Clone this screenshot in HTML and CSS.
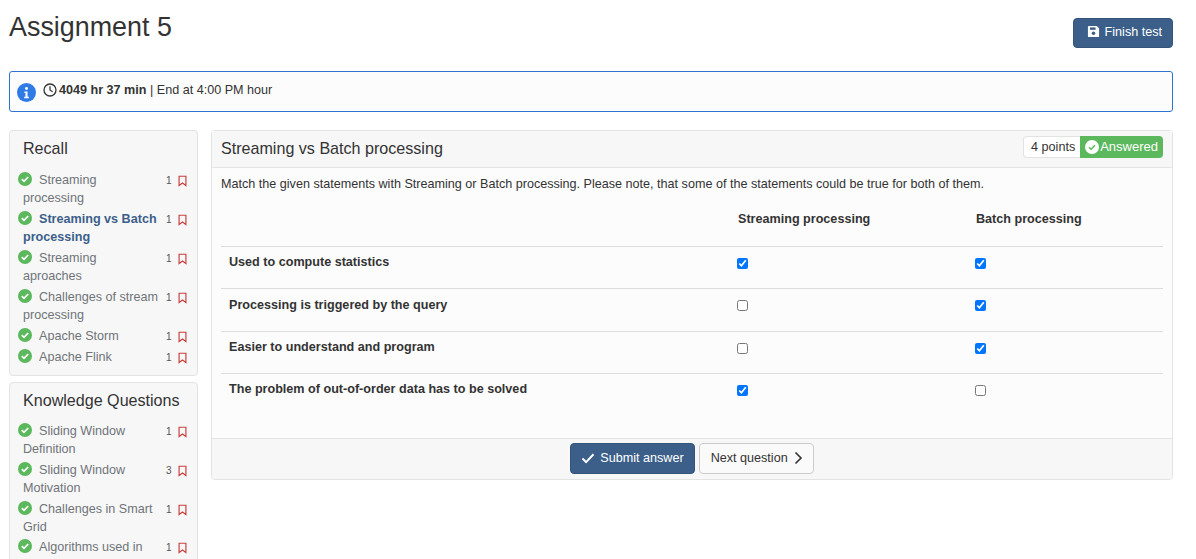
FILE: index.html
```html
<!DOCTYPE html>
<html lang="en">
<head>
  <meta charset="UTF-8" />
  <meta name="viewport" content="width=device-width, initial-scale=1.0"/>
  <title>Assignment 5</title>
  <link rel="stylesheet" href="styles.css">
</head>
<body>
  <svg class="defs" width="0" height="0">
    <symbol id="done" viewBox="0 0 14 14">
      <circle cx="7" cy="7" r="7" fill="#5cb85c"/>
      <path d="M3.800 7.200l2.200 2.200 4.200-4.400" fill="none" stroke="#fff" stroke-width="1.700"/>
    </symbol>
    <symbol id="mark" viewBox="0 0 10 12">
      <path d="M1.200 .7h7.600v10.400L5 8.300l-3.800 2.800z" fill="none" stroke="#c9413f" stroke-width="1.300"/>
    </symbol>
  </svg>

  <div class="page">
    <header class="top">
      <h1>Assignment 5</h1>
      <button class="btn btn-main btn-finish" type="button">
        <svg class="ico" viewBox="0 0 14 14" width="13" height="13"><path d="M2 1h8.500L13 3.500V12a1 1 0 0 1-1 1H2a1 1 0 0 1-1-1V2a1 1 0 0 1 1-1z" fill="#fff"/><rect x="3.200" y="2.600" width="6" height="2.600" fill="#3c5f8a"/><circle cx="7" cy="9" r="1.900" fill="#3c5f8a"/></svg>
        Finish test
      </button>
    </header>

    <div class="timer">
      <span class="info-dot">
        <svg viewBox="0 0 18 18" width="19" height="19"><circle cx="9" cy="9" r="9" fill="#2f7ae5"/><circle cx="9" cy="5.200" r="1.400" fill="#fff"/><path d="M7 8h3v5h1.200v1.400H6.800V13H8V9.400H7z" fill="#fff"/></svg>
      </span>
      <svg class="ico" viewBox="0 0 14 14" width="14" height="14"><circle cx="7" cy="7" r="6" fill="none" stroke="#333" stroke-width="1.300"/><path d="M7 3.300V7l2.600 1.700" fill="none" stroke="#333" stroke-width="1.200"/></svg>
      <span><b>4049 hr 37 min</b> | End at 4:00 PM hour</span>
    </div>

    <div class="columns">
      <aside class="side">
        <section class="side-box">
          <h2>Recall</h2>
          <div class="side-item"><span class="side-text"><svg class="done"><use href="#done"/></svg>Streaming processing</span><span class="side-num">1</span><svg class="mark"><use href="#mark"/></svg></div>
          <div class="side-item active"><span class="side-text"><svg class="done"><use href="#done"/></svg>Streaming vs Batch processing</span><span class="side-num">1</span><svg class="mark"><use href="#mark"/></svg></div>
          <div class="side-item"><span class="side-text"><svg class="done"><use href="#done"/></svg>Streaming aproaches</span><span class="side-num">1</span><svg class="mark"><use href="#mark"/></svg></div>
          <div class="side-item"><span class="side-text"><svg class="done"><use href="#done"/></svg>Challenges of stream processing</span><span class="side-num">1</span><svg class="mark"><use href="#mark"/></svg></div>
          <div class="side-item"><span class="side-text"><svg class="done"><use href="#done"/></svg>Apache Storm</span><span class="side-num">1</span><svg class="mark"><use href="#mark"/></svg></div>
          <div class="side-item"><span class="side-text"><svg class="done"><use href="#done"/></svg>Apache Flink</span><span class="side-num">1</span><svg class="mark"><use href="#mark"/></svg></div>
        </section>
        <section class="side-box">
          <h2>Knowledge Questions</h2>
          <div class="side-item"><span class="side-text"><svg class="done"><use href="#done"/></svg>Sliding Window Definition</span><span class="side-num">1</span><svg class="mark"><use href="#mark"/></svg></div>
          <div class="side-item"><span class="side-text"><svg class="done"><use href="#done"/></svg>Sliding Window Motivation</span><span class="side-num">3</span><svg class="mark"><use href="#mark"/></svg></div>
          <div class="side-item"><span class="side-text"><svg class="done"><use href="#done"/></svg>Challenges in Smart Grid</span><span class="side-num">1</span><svg class="mark"><use href="#mark"/></svg></div>
          <div class="side-item"><span class="side-text"><svg class="done"><use href="#done"/></svg>Algorithms used in Streaming</span><span class="side-num">1</span><svg class="mark"><use href="#mark"/></svg></div>
        </section>
      </aside>

      <main class="card">
        <div class="card-head">
          <h3>Streaming vs Batch processing</h3>
          <div class="badges">
            <span class="badge-points">4 points</span>
            <span class="badge-answered">
              <svg viewBox="0 0 14 14" width="14" height="14"><circle cx="7" cy="7" r="7" fill="#fff"/><path d="M4 7.200l2.100 2.100 3.900-4" fill="none" stroke="#5cb85c" stroke-width="1.500"/></svg>Answered
            </span>
          </div>
        </div>
        <div class="card-body">
          <p class="intro">Match the given statements with Streaming or Batch processing. Please note, that some of the statements could be true for both of them.</p>
          <table class="match">
            <thead>
              <tr><th></th><th>Streaming processing</th><th>Batch processing</th></tr>
            </thead>
            <tbody>
              <tr><td>Used to compute statistics</td><td><input type="checkbox" checked></td><td><input type="checkbox" checked></td></tr>
              <tr><td>Processing is triggered by the query</td><td><input type="checkbox"></td><td><input type="checkbox" checked></td></tr>
              <tr><td>Easier to understand and program</td><td><input type="checkbox"></td><td><input type="checkbox" checked></td></tr>
              <tr><td>The problem of out-of-order data has to be solved</td><td><input type="checkbox" checked></td><td><input type="checkbox"></td></tr>
            </tbody>
          </table>
        </div>
        <div class="card-foot">
          <button class="btn btn-main" type="button">
            <svg class="ico" viewBox="0 0 14 14" width="14" height="14"><path d="M1.500 7.500l3.600 3.600 7.400-7.800" fill="none" stroke="#fff" stroke-width="2"/></svg>
            Submit answer
          </button>
          <button class="btn btn-plain" type="button">
            Next question
            <svg class="ico" viewBox="0 0 10 14" width="10" height="14"><path d="M2.500 1.500L8 7l-5.500 5.500" fill="none" stroke="#333" stroke-width="1.600"/></svg>
          </button>
        </div>
      </main>
    </div>
  </div>
</body>
</html>
```

FILE: styles.css
```css
html, body {
  margin: 0;
  background: #fff;
}
body {
  font-family: "Liberation Sans", Arial, sans-serif;
  font-size: 12.6px;
  line-height: 18px;
  color: #333;
}
.defs {
  display: block;
  height: 0;
}
.page {
  height: 559px;
  overflow: hidden;
  padding: 0 23px 0 9px;
  box-sizing: border-box;
}
.top {
  display: flex;
  justify-content: space-between;
  align-items: flex-start;
  height: 71px;
}
h1 {
  margin: 10px 0 0;
  font-size: 26.9px;
  line-height: 34px;
  font-weight: 400;
}
.btn {
  font-family: inherit;
  font-size: 12.6px;
  line-height: 18px;
  border-radius: 4px;
  display: inline-flex;
  align-items: center;
  gap: 5px;
  height: 31px;
  padding-bottom: 2px;
  cursor: pointer;
}
.btn-main {
  background: #3c5f8a;
  border: 1px solid #34547b;
  color: #fff;
  padding-left: 10px;
  padding-right: 10px;
}
.btn-plain {
  background: #fafafa;
  border: 1px solid #ccc;
  color: #333;
  padding-left: 11px;
  padding-right: 10px;
}
.btn-finish {
  margin-top: 18px;
  height: 30px;
  padding-left: 13px;
  padding-bottom: 4px;
}
.timer {
  display: flex;
  align-items: center;
  height: 41px;
  box-sizing: border-box;
  border: 1px solid #2f74d0;
  border-radius: 3px;
  background: #fcfcfc;
  padding: 0 7px 3px;
  gap: 2px;
}
.info-dot {
  display: flex;
  margin-top: 4px;
  margin-right: 5px;
}
.columns {
  display: flex;
  align-items: flex-start;
  gap: 13px;
  margin-top: 18px;
}
.side {
  width: 189px;
  flex: none;
}
.side-box {
  background: #f7f7f7;
  border: 1px solid #e3e3e3;
  border-radius: 4px;
  padding: 7px 8px 8px;
  margin-bottom: 6px;
  box-sizing: border-box;
}
.side-box h2 {
  margin: 0 0 13px 5px;
  font-size: 16.1px;
  line-height: 20px;
  font-weight: 400;
  color: #333;
}
.side-box + .side-box h2 {
  margin-bottom: 12px;
}
.side-item {
  display: flex;
  align-items: flex-start;
  margin-bottom: 3px;
  color: #6f7479;
  line-height: 18px;
}
.side-item:nth-last-child(2) {
  margin-bottom: 2px;
}
.side-item:last-child {
  margin-bottom: 0;
}
.side-item.active {
  color: #3c5f8a;
  font-weight: 700;
}
.side-text {
  flex: 1;
  padding: 0 7.500px 0 5px;
  min-width: 0;
}
.done {
  width: 14px;
  height: 14px;
  margin: 0 7px 0 -5px;
  vertical-align: -2px;
}
.side-num {
  flex: none;
  width: 8px;
  font-size: 10px;
  line-height: 18px;
  font-weight: 400;
  color: #555;
  margin: 1px 4px 0 0;
}
.mark {
  flex: none;
  width: 9px;
  height: 12px;
  margin: 4px 2px 0 0;
}
.card {
  flex: 1;
  min-width: 0;
  background: #fcfcfc;
  border: 1px solid #e3e3e3;
  border-radius: 4px;
}
.card-head {
  display: flex;
  justify-content: space-between;
  align-items: center;
  height: 36px;
  background: #f7f7f7;
  border-bottom: 1px solid #e3e3e3;
  padding: 0 9px;
}
h3 {
  margin: -2px 0 0;
  font-size: 16.1px;
  font-weight: 400;
}
.badges {
  display: flex;
  height: 22px;
  margin-top: -4px;
}
.badge-points {
  background: #fff;
  border: 1px solid #e3e3e3;
  border-right: 0;
  border-radius: 4px 0 0 4px;
  padding: 0 5px 0 7px;
  line-height: 20px;
}
.badge-answered {
  display: flex;
  align-items: center;
  gap: 1px;
  background: #5cb85c;
  color: #fff;
  border-radius: 0 4px 4px 0;
  padding: 0 5px;
  font-size: 13px;
}
.card-body {
  padding: 7px 9px 0;
  height: 270px;
  box-sizing: border-box;
}
.intro {
  margin: 0;
  line-height: 18px;
}
.match {
  width: 100%;
  border-collapse: collapse;
  table-layout: fixed;
  margin-top: 10px;
}
.match th {
  text-align: left;
  font-weight: 700;
  height: 43px;
  padding: 0 0 11px 8px;
  box-sizing: border-box;
  border-bottom: 1px solid #ddd;
}
.match th:nth-child(1) {
  width: 509px;
}
.match th:nth-child(2) {
  width: 238px;
}
.match td {
  height: 42px;
  padding: 6px 0 0 7px;
  box-sizing: border-box;
  vertical-align: top;
  font-weight: 700;
  border-bottom: 1px solid #ddd;
}
.match td:first-child {
  padding-left: 8px;
}
.match tr:nth-child(2) td {
  height: 43px;
}
.match tr:nth-child(2) td:first-child {
  padding-top: 7px;
}
.match tr:last-child td {
  border-bottom: 0;
}
.match input {
  width: 11px;
  height: 11px;
  margin: 5px 0 0;
  display: block;
}
.card-foot {
  display: flex;
  justify-content: center;
  gap: 4px;
  height: 41px;
  box-sizing: border-box;
  background: #f7f7f7;
  border-top: 1px solid #e3e3e3;
  padding-top: 4px;
  border-radius: 0 0 4px 4px;
}
```
